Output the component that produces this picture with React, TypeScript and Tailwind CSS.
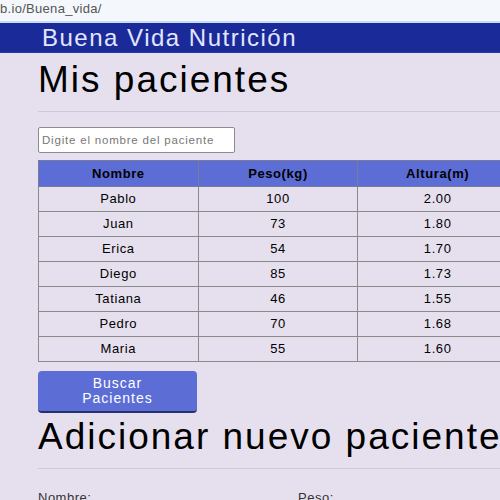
const pacientes = [
  { nombre: 'Pablo', peso: '100', altura: '2.00' },
  { nombre: 'Juan', peso: '73', altura: '1.80' },
  { nombre: 'Erica', peso: '54', altura: '1.70' },
  { nombre: 'Diego', peso: '85', altura: '1.73' },
  { nombre: 'Tatiana', peso: '46', altura: '1.55' },
  { nombre: 'Pedro', peso: '70', altura: '1.68' },
  { nombre: 'Maria', peso: '55', altura: '1.60' },
];

export default function App() {
  return (
    <div className="w-[500px] h-[500px] overflow-hidden bg-[#e6e0ee] font-['Liberation_Sans',Arial,sans-serif] text-black">
      {/* barra de direcciones */}
      <div className="h-[23px] bg-[#f4f7fb] border-b-2 border-[#c9dcf3] text-[13px] tracking-[0.3px] text-[#555] leading-[18px]">
        b.io/Buena_vida/
      </div>

      <header className="h-[30px] bg-[#1b2a99] border-b border-[#2a3aa8] flex items-center pl-[42px]">
        <span className="text-[24px] tracking-[1.5px] text-[#e3e6ff] leading-none">Buena Vida Nutrición</span>
      </header>

      <main className="pl-[38px]">
        <h1 className="text-[37px] tracking-[2px] leading-none mt-[8px] pb-[13px] border-b border-[#cfc9d6] w-[600px]">
          Mis pacientes
        </h1>

        <input
          className="block mt-[15px] w-[197px] h-[26px] border border-[#8c8c8c] bg-white rounded-[2px] px-[3px] text-[11.5px] tracking-[0.8px] placeholder:text-[#777] outline-none"
          placeholder="Digite el nombre del paciente"
        />

        <table className="mt-[7px] w-[480px] border-collapse text-[13px] tracking-[0.6px] table-fixed">
          <thead>
            <tr className="bg-[#5c6dd6] h-[26px]">
              <th className="border border-[#7a7a9a] font-bold">Nombre</th>
              <th className="border border-[#7a7a9a] font-bold">Peso(kg)</th>
              <th className="border border-[#7a7a9a] font-bold">Altura(m)</th>
            </tr>
          </thead>
          <tbody>
            {pacientes.map((p) => (
              <tr key={p.nombre} className="h-[25px]">
                <td className="border border-[#8a8a8a] text-center">{p.nombre}</td>
                <td className="border border-[#8a8a8a] text-center">{p.peso}</td>
                <td className="border border-[#8a8a8a] text-center">{p.altura}</td>
              </tr>
            ))}
          </tbody>
        </table>

        <button className="block mt-[9px] w-[159px] h-[42px] bg-[#5c6dd6] text-white text-[14px] tracking-[1px] leading-[15px] rounded-[4px] border-b-2 border-[#25306e]">
          Buscar
          <br />
          Pacientes
        </button>

        <h2 className="text-[37px] tracking-[2px] leading-none mt-[5px] pb-[13px] border-b border-[#cfc9d6] w-[600px] whitespace-nowrap">
          Adicionar nuevo paciente
        </h2>

        <div className="flex mt-[21px] text-[13px] tracking-[0.5px] leading-[15px] text-[#333]">
          <span className="w-[260px]">Nombre:</span>
          <span>Peso:</span>
        </div>
      </main>
    </div>
  );
}
